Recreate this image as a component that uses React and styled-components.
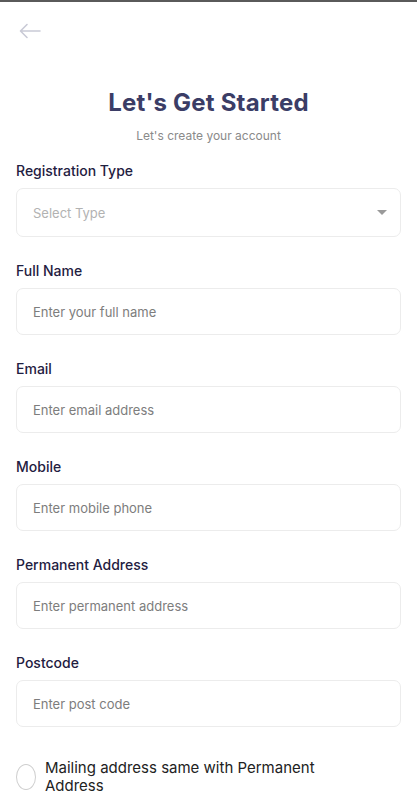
import React, { useState } from "react";
import styled, { createGlobalStyle } from "styled-components";

const GlobalStyle = createGlobalStyle`
  * { box-sizing: border-box; }
  body {
    margin: 0;
    background: #fff;
    font-family: Inter, "Noto Sans", sans-serif;
  }
`;

const Page = styled.div`
  border-top: 2px solid #5a5a5a;
  padding: 0 16px 16px;
  display: flex;
  flex-direction: column;
`;

const TopBar = styled.div`
  height: 60px;
  display: flex;
  align-items: center;
  padding-left: 2px;
  padding-bottom: 2px;
`;

const BackButton = styled.button`
  border: none;
  background: none;
  padding: 0;
  width: 24px;
  height: 24px;
  display: flex;
  align-items: center;
  justify-content: center;
  cursor: pointer;
`;

const Header = styled.div`
  display: flex;
  flex-direction: column;
  align-items: center;
  margin-top: 25px;
`;

const Title = styled.h1`
  margin: 0;
  font-size: 24px;
  line-height: 32px;
  font-weight: 700;
  color: #3b3d66;
  letter-spacing: 0.2px;
`;

const Subtitle = styled.p`
  margin: 9px 0 0;
  font-size: 12px;
  line-height: 16px;
  color: #8a8a8a;
`;

const Form = styled.form`
  display: flex;
  flex-direction: column;
  gap: 24px;
  margin-top: 17px;
`;

const Field = styled.div`
  display: flex;
  flex-direction: column;
  gap: 7px;
`;

const Label = styled.label`
  font-size: 14px;
  line-height: 20px;
  font-weight: 500;
  color: #1f2041;
`;

const Box = styled.div`
  position: relative;
  height: ${(p) => p.$h}px;
  border: 1px solid #ececec;
  border-radius: 7px;
  display: flex;
  align-items: center;
`;

const Input = styled.input`
  flex: 1;
  border: none;
  outline: none;
  background: transparent;
  height: 100%;
  padding: 0 16px;
  font-family: inherit;
  font-size: 13px;
  color: #333;
  &::placeholder {
    color: #7d7d7d;
  }
`;

const SelectText = styled.span`
  flex: 1;
  padding: 0 16px;
  font-size: 13px;
  color: #b2b2b2;
`;

const Caret = styled.span`
  width: 0;
  height: 0;
  margin-right: 13px;
  border-left: 5px solid transparent;
  border-right: 5px solid transparent;
  border-top: 5px solid #9a9a9a;
`;

const CheckRow = styled.label`
  display: flex;
  align-items: flex-start;
  gap: 9px;
  margin-top: 8px;
  cursor: pointer;
`;

const Circle = styled.span`
  flex: none;
  width: 20px;
  height: 26px;
  margin-top: 5px;
  border: 1px solid #cfcfcf;
  border-radius: 50%;
  background: ${(p) => (p.$on ? "#3b3d66" : "#fff")};
`;

const CheckText = styled.span`
  font-size: 15px;
  line-height: 18px;
  color: #222;
  max-width: 290px;
`;

const fields = [
  { label: "Full Name", placeholder: "Enter your full name" },
  { label: "Email", placeholder: "Enter email address" },
  { label: "Mobile", placeholder: "Enter mobile phone" },
  { label: "Permanent Address", placeholder: "Enter permanent address" },
  { label: "Postcode", placeholder: "Enter post code" },
];

export default function App() {
  const [same, setSame] = useState(false);

  return (
    <>
      <GlobalStyle />
      <Page>
        <TopBar>
          <BackButton type="button">
            <svg width="22" height="16" viewBox="0 0 22 16" fill="none">
              <path
                d="M21 8H2M8 1.5L1.5 8L8 14.5"
                stroke="#c9cad6"
                strokeWidth="1.6"
                strokeLinecap="round"
                strokeLinejoin="round"
              />
            </svg>
          </BackButton>
        </TopBar>
        <Header>
          <Title>Let's Get Started</Title>
          <Subtitle>Let's create your account</Subtitle>
        </Header>
        <Form onSubmit={(e) => e.preventDefault()}>
          <Field>
            <Label>Registration Type</Label>
            <Box $h={49}>
              <SelectText>Select Type</SelectText>
              <Caret />
            </Box>
          </Field>
          {fields.map((f) => (
            <Field key={f.label}>
              <Label>{f.label}</Label>
              <Box $h={47}>
                <Input placeholder={f.placeholder} />
              </Box>
            </Field>
          ))}
          <CheckRow onClick={() => setSame(!same)}>
            <Circle $on={same} />
            <CheckText>Mailing address same with Permanent Address</CheckText>
          </CheckRow>
        </Form>
      </Page>
    </>
  );
}
